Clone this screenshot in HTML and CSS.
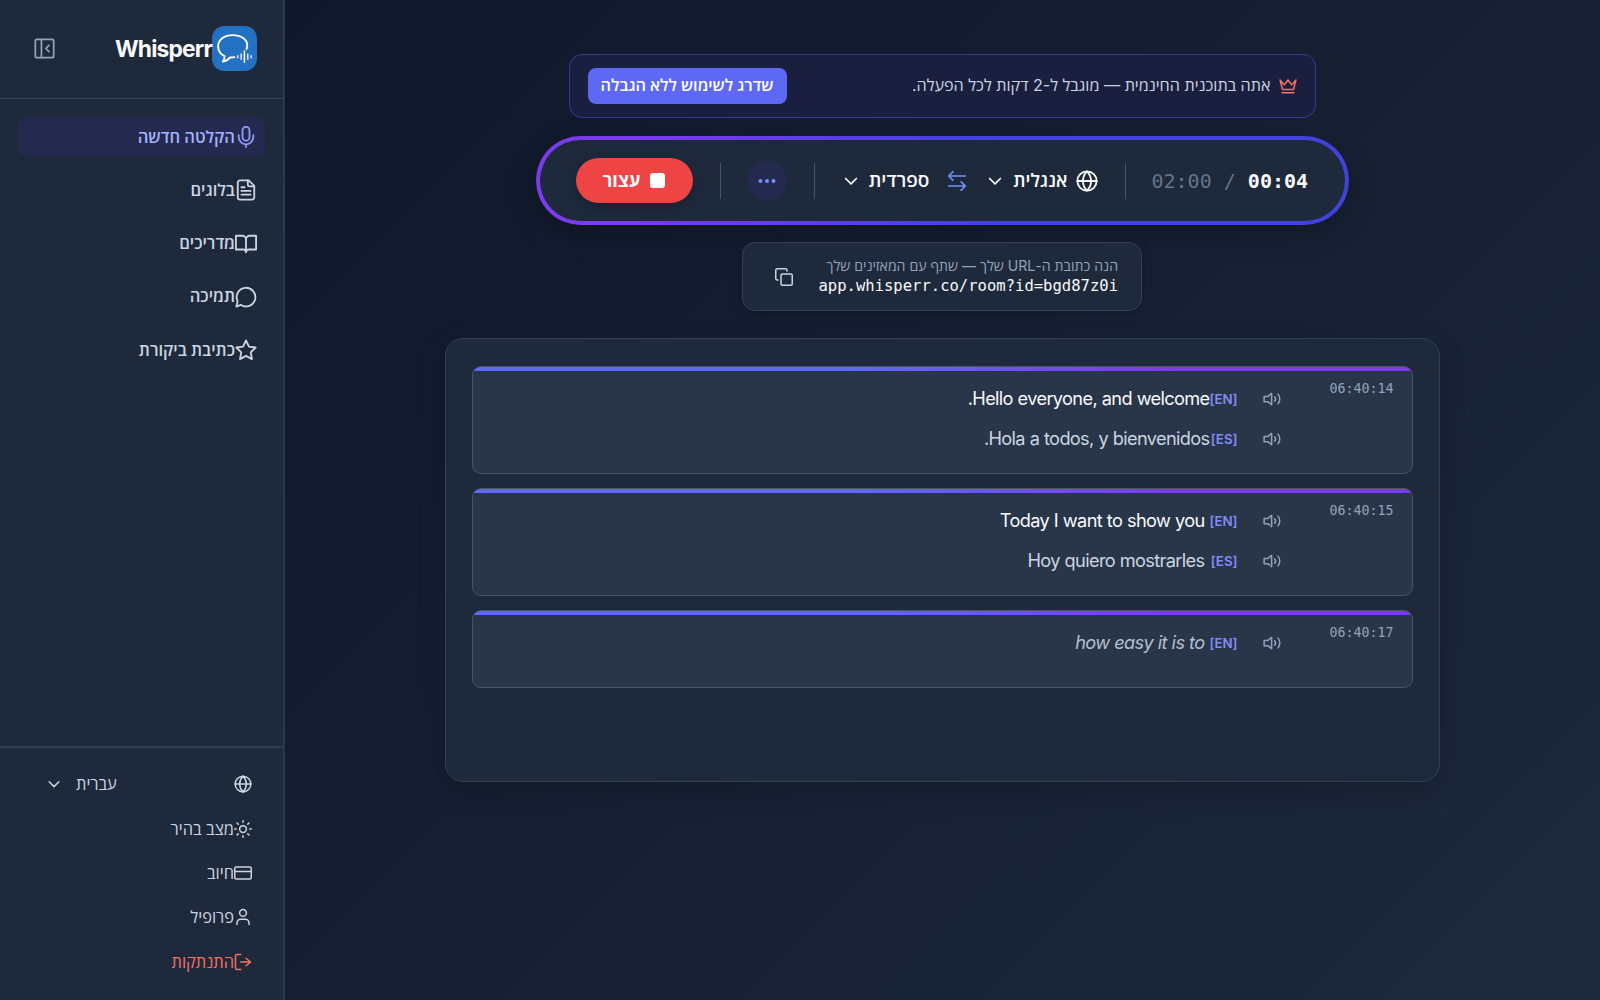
FILE: index.html
```html
<!DOCTYPE html>
<html lang="he" dir="rtl">
<head>
  <meta charset="utf-8">
  <title>Whisperr</title>
  <link rel="stylesheet" href="styles.css">
</head>
<body>
  <svg class="sprite">
    <symbol id="globe" viewBox="0 0 24 24"><circle cx="12" cy="12" r="10.500"/><path d="M1.500 12h21M12 1.500a15.300 15.300 0 0 1 4.500 10.500 15.300 15.300 0 0 1-4.500 10.500 15.300 15.300 0 0 1-4.500-10.500A15.300 15.300 0 0 1 12 1.500z"/></symbol>
    <symbol id="chevron" viewBox="0 0 24 24"><path d="m5.500 9 6.500 6.500L18.500 9"/></symbol>
    <symbol id="speaker" viewBox="0 0 24 24"><path d="M11.500 4.500 6.500 8.500H1.500v7h5l5 4z"/><path d="M15.500 9a4.500 4.500 0 0 1 0 6M20 5.500a10 10 0 0 1 0 13"/></symbol>
  </svg>
  <div class="app">
    <aside class="sidebar">
      <div class="brand">
        <svg class="logo" viewBox="0 0 44 44">
          <rect width="44" height="44" rx="12" fill="#2470c2"/>
          <path d="M33.700 22.500c.6-1.300.8-2.500.8-3.500 0-5.800-6-10-14.300-10S6 13.500 6 20c0 4 2.300 7.400 6.300 9.500.2 2-.5 3.700-1.800 5.300 3.500-.6 5.500-1.900 7-4.100 1.500.2 3 .2 4.500-.2" fill="none" stroke="#fff" stroke-width="1.800" stroke-linecap="round" stroke-linejoin="round"/>
          <path d="M25.200 29v2M28.500 27.500v5M35 27.500v5M38.300 29v2" stroke="#dbe9ff" stroke-width="1.500" stroke-linecap="round"/>
          <path d="M31.700 24.500v11" stroke="#fff" stroke-width="1.500" stroke-linecap="round"/>
        </svg>
        <span class="brand-name">Whisperr</span>
        <button class="collapse">
          <svg class="icon" viewBox="0 0 24 24"><rect x="1.500" y="1.500" width="21" height="21" rx="2"/><path d="M8.500 2v20M17 8.500 13.500 12l3.500 3.500"/></svg>
        </button>
      </div>
      <nav class="nav">
        <a class="nav-item active"><svg class="icon" viewBox="0 0 24 24"><path d="M12 1a3.800 3.800 0 0 0-3.800 3.800v7.400a3.800 3.800 0 0 0 7.600 0V4.800A3.800 3.800 0 0 0 12 1z"/><path d="M20 10v2a8 8 0 0 1-16 0v-2M12 20v3"/></svg><span>הקלטה חדשה</span></a>
        <a class="nav-item"><svg class="icon" viewBox="0 0 24 24"><path d="M15 1.500H5.500A2.500 2.500 0 0 0 3 4v16a2.500 2.500 0 0 0 2.500 2.500h13A2.500 2.500 0 0 0 21 20V7.500z"/><path d="M14 1.500V6a2 2 0 0 0 2 2h5M10.500 9H7M17 13H7M17 17H7"/></svg><span>בלוגים</span></a>
        <a class="nav-item"><svg class="icon" viewBox="0 0 24 24"><path d="M1 3h7a4 4 0 0 1 4 4v14a3 3 0 0 0-3-3H1zM23 3h-7a4 4 0 0 0-4 4v14a3 3 0 0 1 3-3h8z"/></svg><span>מדריכים</span></a>
        <a class="nav-item"><svg class="icon" viewBox="0 0 24 24"><path d="M6.200 20.500A10.200 10.200 0 1 0 2.800 16.500L1.500 22.500z"/></svg><span>תמיכה</span></a>
        <a class="nav-item"><svg class="icon" viewBox="0 0 24 24"><path d="m12 1.500 3.200 6.800 7.300 1-5.300 5.200 1.300 7.500-6.500-3.600L5.500 22l1.300-7.500L1.500 9.300l7.300-1z"/></svg><span>כתיבת ביקורת</span></a>
      </nav>
      <div class="account">
        <a class="account-item language"><svg class="icon"><use href="#globe"/></svg><span>עברית</span><svg class="icon caret"><use href="#chevron"/></svg></a>
        <a class="account-item"><svg class="icon" viewBox="0 0 24 24"><circle cx="12" cy="12" r="4.500"/><path d="M12 1v2M12 21v2M1 12h2M21 12h2M4.200 4.200l1.500 1.500M18.300 18.300l1.500 1.500M4.200 19.800l1.500-1.500M18.300 5.700l1.500-1.500"/></svg><span>מצב בהיר</span></a>
        <a class="account-item"><svg class="icon" viewBox="0 0 24 24"><rect x="1" y="4" width="22" height="16" rx="2"/><path d="M1 10h22"/></svg><span>חיוב</span></a>
        <a class="account-item"><svg class="icon" viewBox="0 0 24 24"><circle cx="12" cy="6.500" r="4.500"/><path d="M4 22v-2a5 5 0 0 1 5-5h6a5 5 0 0 1 5 5v2"/></svg><span>פרופיל</span></a>
        <a class="account-item logout"><svg class="icon" viewBox="0 0 24 24"><path d="M9 2H4a2 2 0 0 0-2 2v16a2 2 0 0 0 2 2h5M16 17l6-5-6-5M22 12H9"/></svg><span>התנתקות</span></a>
      </div>
    </aside>

    <main class="main">
      <div class="upgrade">
        <svg class="icon crown" viewBox="0 0 24 24"><path d="m1.500 4 3 12.500h15l3-12.500-5.500 6.500L12 4l-5 6.500zM4 21h16"/></svg>
        <span class="upgrade-text">אתה בתוכנית החינמית — מוגבל ל-2 דקות לכל הפעלה.</span>
        <button class="upgrade-btn"><span>שדרג לשימוש ללא הגבלה</span></button>
      </div>

      <div class="controls">
        <div class="timer" dir="ltr"><span class="limit">02:00 /</span> <span>00:04</span></div>
        <i class="divider"></i>
        <div class="lang from"><svg class="icon"><use href="#globe"/></svg><span>אנגלית</span><svg class="icon caret"><use href="#chevron"/></svg></div>
        <svg class="icon swap" viewBox="0 0 24 24"><path d="M7 1 2 6l5 5M2 6h20M17 13l5 5-5 5M22 18H2"/></svg>
        <div class="lang to"><span>ספרדית</span><svg class="icon caret"><use href="#chevron"/></svg></div>
        <i class="divider"></i>
        <button class="more"><svg viewBox="0 0 20 6"><circle cx="3.500" cy="3" r="2"/><circle cx="10" cy="3" r="2"/><circle cx="16.500" cy="3" r="2"/></svg></button>
        <i class="divider"></i>
        <button class="stop"><i class="square"></i><span>עצור</span></button>
      </div>

      <div class="share">
        <div class="share-text">
          <p class="share-label">הנה כתובת ה-URL שלך — שתף עם המאזינים שלך</p>
          <p class="share-url" dir="ltr">app.whisperr.co/room?id=bgd87z0i</p>
        </div>
        <svg class="icon copy" viewBox="0 0 24 24"><rect x="8" y="8" width="15" height="15" rx="2"/><path d="M4 16H3a2 2 0 0 1-2-2V3a2 2 0 0 1 2-2h11a2 2 0 0 1 2 2v1"/></svg>
      </div>

      <section class="transcript">
        <article class="entry">
          <time>06:40:14</time>
          <div class="lines">
            <p class="line"><svg class="icon"><use href="#speaker"/></svg><b>[EN]</b><span class="text">Hello everyone, and welcome.</span></p>
            <p class="line translated"><svg class="icon"><use href="#speaker"/></svg><b>[ES]</b><span class="text">Hola a todos, y bienvenidos.</span></p>
          </div>
        </article>
        <article class="entry">
          <time>06:40:15</time>
          <div class="lines">
            <p class="line spaced"><svg class="icon"><use href="#speaker"/></svg><b>[EN]</b><span class="text">Today I want to show you</span></p>
            <p class="line spaced translated"><svg class="icon"><use href="#speaker"/></svg><b>[ES]</b><span class="text">Hoy quiero mostrarles</span></p>
          </div>
        </article>
        <article class="entry">
          <time>06:40:17</time>
          <div class="lines">
            <p class="line spaced interim"><svg class="icon"><use href="#speaker"/></svg><b>[EN]</b><span class="text">how easy it is to</span></p>
          </div>
        </article>
      </section>
    </main>
  </div>
</body>
</html>
```
FILE: styles.css
```css
* {
  box-sizing: border-box;
}
body {
  margin: 0;
  font-family: Inter, "Open Sans", "Noto Sans", sans-serif;
  color: #f8fafc;
  background: #0f172a;
}
p {
  margin: 0;
}
button {
  font: inherit;
  color: inherit;
  border: none;
  padding: 0;
}
.sprite {
  display: none;
}
.icon {
  flex: none;
  fill: none;
  stroke: currentColor;
  stroke-width: 2;
  stroke-linecap: round;
  stroke-linejoin: round;
}
.app {
  display: flex;
  flex-direction: row-reverse;
  height: 1000px;
  overflow: hidden;
}

/* sidebar */
.sidebar {
  width: 285px;
  flex: none;
  display: flex;
  flex-direction: column;
  background: #1e293b;
  border-right: 2px solid #2b384b;
}
.brand {
  height: 99px;
  display: flex;
  align-items: center;
  padding: 0 26px 1px 34px;
  border-bottom: 1px solid #3b485b;
}
.logo {
  width: 45px;
  height: 45px;
}
.brand-name {
  font-size: 22.800px;
  font-weight: 700;
  letter-spacing: -0.800px;
}
.collapse {
  display: flex;
  margin-right: auto;
  background: none;
  color: #94a3b8;
}
.collapse .icon {
  width: 21px;
  height: 21px;
}
.nav {
  flex: 1;
  padding: 18px 18px 0 18px;
  display: flex;
  flex-direction: column;
  gap: 13.300px;
}
.nav-item {
  height: 40px;
  display: flex;
  align-items: center;
  padding: 0 8px;
  border-radius: 9px;
  font-size: 16.600px;
  font-weight: 600;
  color: #cbd5e1;
}
.nav-item span {
  margin-top: -2px;
}
.nav-item .icon {
  width: 22px;
  height: 22px;
}
.nav-item.active {
  background: #24294f;
  color: #a5b4fc;
}
.nav-item.active .icon {
  color: #8f9cf5;
}
.account {
  height: 254px;
  border-top: 2px solid #303d50;
  padding: 14px 31px 0 45px;
}
.account-item {
  height: 44.400px;
  display: flex;
  align-items: center;
  font-size: 16.400px;
  color: #cbd5e1;
}
.account-item span {
  margin-top: -1px;
}
.account-item .icon {
  width: 18px;
  height: 18px;
}
.language span {
  margin-right: auto;
  margin-left: 13px;
}
.logout {
  color: #f87160;
}

/* main */
.main {
  flex: 1;
  display: flex;
  flex-direction: column;
  align-items: center;
  padding: 54px 1px 0 0;
  background: linear-gradient(135deg, #0f172a 0%, #1e293b 100%);
}
.upgrade {
  width: 747px;
  height: 64px;
  display: flex;
  align-items: center;
  padding: 0 18px;
  border: 1px solid #3d3699;
  border-radius: 13px;
  background: #1a1f3f;
  font-size: 16.150px;
  color: #cbd5e1;
}
.upgrade span {
  position: relative;
  top: -1px;
}
.crown {
  width: 18px;
  height: 18px;
  margin-left: 8px;
  color: #f87160;
}
.upgrade-btn {
  width: 199px;
  height: 36px;
  margin-right: auto;
  border-radius: 8px;
  background: #5d69f4;
  color: #fff;
  font-size: 16.300px;
  font-weight: 600;
}
.controls {
  width: 813px;
  height: 89px;
  margin-top: 18px;
  display: flex;
  align-items: center;
  padding: 0 36px;
  border: 4.500px solid transparent;
  border-radius: 45px;
  background: linear-gradient(#1e293b, #1e293b) padding-box,
              linear-gradient(90deg, #7c3aed 0%, #7c3aed 12%, #3f43dc 58%, #3f43dc 100%) border-box;
  box-shadow: 0 9px 28px rgba(0, 0, 0, 0.25);
}
.timer {
  width: 157px;
  font: 700 20px "DejaVu Sans Mono", monospace;
  white-space: pre;
  color: #f8fafc;
}
.limit {
  font-weight: 400;
  color: #64748b;
}
.divider {
  width: 1px;
  height: 36px;
  flex: none;
  background: #475569;
}
.timer + .divider {
  margin-right: 26px;
}
.lang {
  display: flex;
  align-items: center;
  font-size: 18.500px;
  font-weight: 600;
}
.lang span {
  margin-top: -2px;
}
.lang .icon {
  width: 22px;
  height: 22px;
}
.lang .caret {
  width: 20px;
  height: 20px;
}
.from {
  margin-right: 27px;
}
.from span {
  margin-right: 8px;
  margin-left: 8px;
}
.swap {
  width: 20px;
  height: 20px;
  margin: 0 18px;
  color: #7292f8;
}
.to {
  font-size: 19px;
}
.to span {
  margin-left: 8px;
}
.to + .divider {
  margin-right: 26px;
}
.more {
  width: 40px;
  height: 40px;
  flex: none;
  margin: 0 27px 0 26px;
  border-radius: 50%;
  background: #24294f;
}
.more svg {
  display: block;
  width: 20px;
  height: 6px;
  margin: auto;
  fill: #7292f8;
}
.stop {
  width: 117px;
  height: 45px;
  margin-right: auto;
  display: flex;
  align-items: center;
  justify-content: center;
  gap: 10px;
  border-radius: 23px;
  background: #ef4444;
  color: #fff;
  font-size: 18px;
  font-weight: 700;
  box-shadow: 0 4px 12px rgba(0, 0, 0, 0.2);
}
.stop span {
  margin-top: -2px;
}
.square {
  width: 15px;
  height: 15px;
  border-radius: 3px;
  background: #fff;
}
.share {
  width: 400px;
  height: 69px;
  margin-top: 17px;
  display: flex;
  align-items: center;
  justify-content: space-between;
  padding: 0 23px 0 32px;
  border: 1px solid #334155;
  border-radius: 13px;
  background: #1e293b;
  box-shadow: 0 4px 12px rgba(0, 0, 0, 0.2);
}
.share-label {
  font-size: 14.100px;
  line-height: 19px;
  color: #94a3b8;
}
.share-url {
  font: 15.550px/22px "DejaVu Sans Mono", monospace;
  text-align: right;
}
.copy {
  width: 18px;
  height: 18px;
  color: #cbd5e1;
}
.transcript {
  width: 995px;
  height: 444px;
  margin-top: 27px;
  padding: 27px 26px;
  display: flex;
  flex-direction: column;
  gap: 14.200px;
  border: 1px solid #334155;
  border-radius: 18px;
  background: #1e293b;
  box-shadow: 0 9px 28px rgba(0, 0, 0, 0.2);
}
.entry {
  min-height: 78px;
  display: flex;
  align-items: flex-start;
  position: relative;
  overflow: hidden;
  padding: 11px 18px 15px;
  border: 1px solid #475569;
  border-radius: 9px;
  background: #293548;
}
.entry::before {
  content: "";
  position: absolute;
  top: 0;
  left: 0;
  right: 0;
  height: 4px;
  background: linear-gradient(90deg, #5d69f4 0%, #5d69f4 40%, #7c3aed 75%);
}
time {
  width: 64px;
  margin-top: 2px;
  font: 13.300px/17px "DejaVu Sans Mono", monospace;
  color: #94a3b8;
}
.lines {
  margin-right: 49px;
}
.line {
  height: 40px;
  display: flex;
  align-items: center;
}
.line .icon {
  width: 18px;
  height: 18px;
  margin: 2px 0 0 25px;
  color: #94a3b8;
}
.line b {
  width: 28px;
  margin-top: 2px;
  font-size: 13.300px;
  font-weight: 600;
  color: #818cf8;
  white-space: nowrap;
}
.text {
  font-size: 18.200px;
  letter-spacing: -0.650px;
  word-spacing: 0.300px;
}
.spaced .text {
  margin-right: 5px;
}
.translated .text {
  color: #cbd5e1;
}
.interim .text {
  font-style: italic;
  color: #b4bfd0;
}
```
